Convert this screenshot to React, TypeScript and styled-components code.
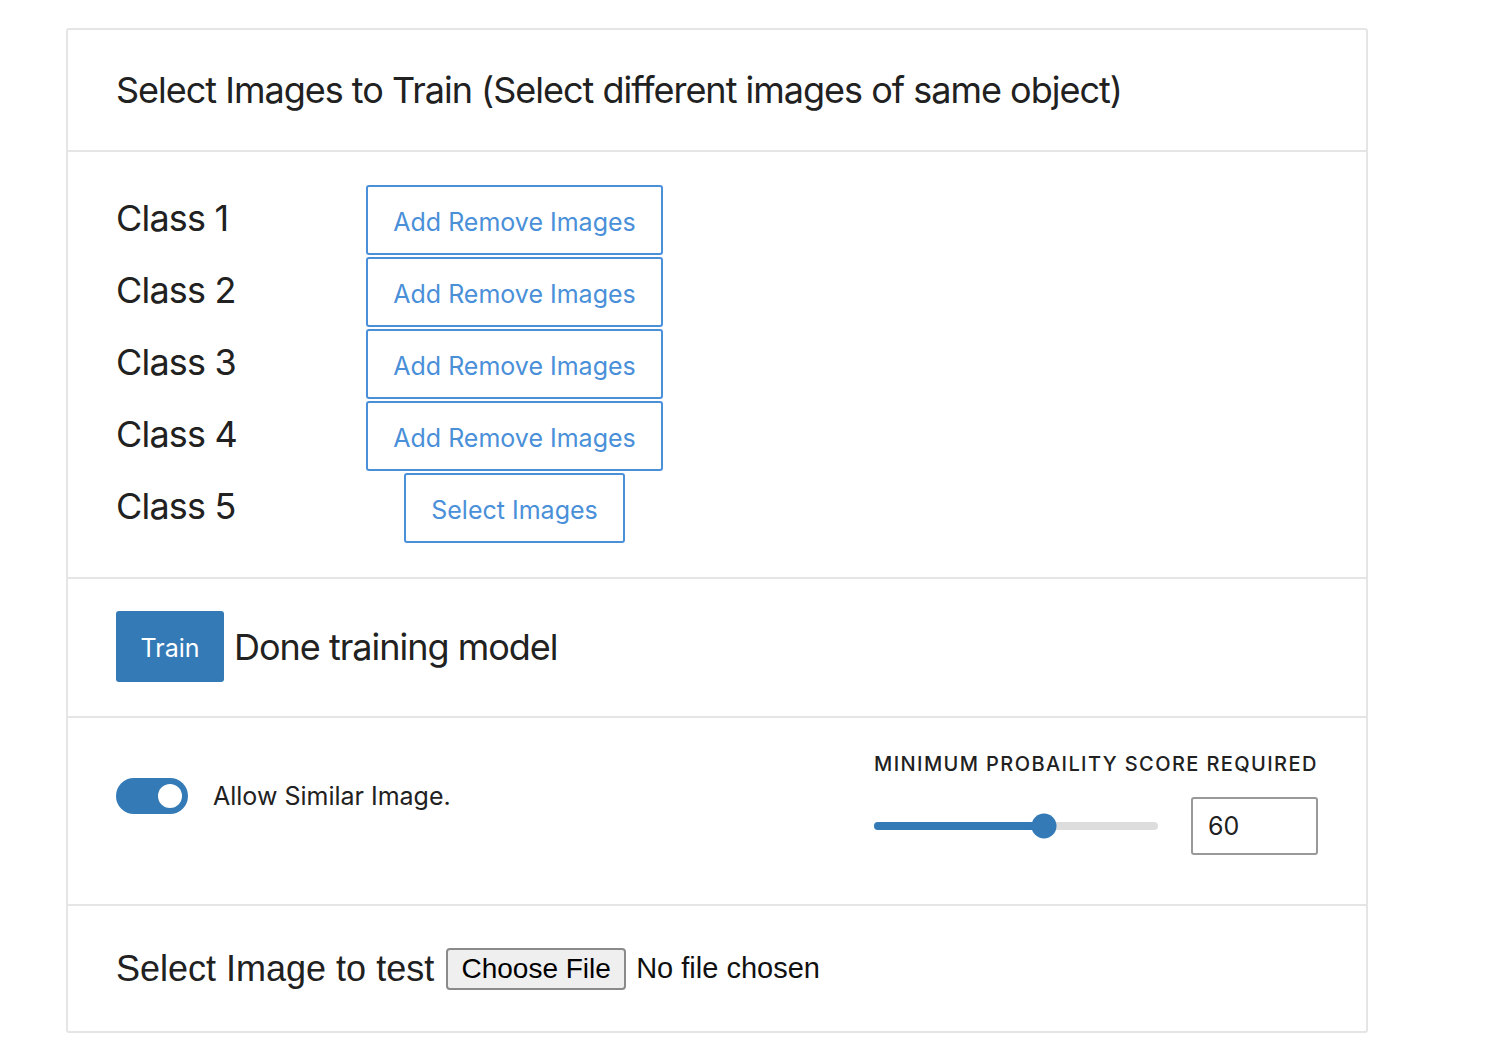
import React from "react";
import styled, { createGlobalStyle } from "styled-components";

const Global = createGlobalStyle`
  html, body { margin: 0; padding: 0; background: #fff; }
  body { font-family: Inter, "Noto Sans", sans-serif; color: #212121; }
`;

const Page = styled.div`
  padding: 28px 118px 30px 66px;
`;

const Card = styled.div`
  border: 2px solid #e5e5e5;
  border-radius: 3px;
  display: flex;
  flex-direction: column;
`;

const Section = styled.div<{ $pad: string }>`
  padding: ${(p) => p.$pad};
  border-bottom: 2px solid #e5e5e5;
  &:last-child { border-bottom: none; }
`;

const Title = styled.div`
  font-size: 36px;
  line-height: 40px;
  letter-spacing: -1px;
`;

const ClassGrid = styled.div`
  display: grid;
  grid-template-columns: 250px 297px;
  row-gap: 2px;
`;

const ClassLabel = styled.div`
  font-size: 36px;
  line-height: 40px;
  letter-spacing: -0.8px;
  display: flex;
  align-items: center;
  padding-bottom: 4px;
`;

const ButtonCell = styled.div`
  display: flex;
  justify-content: center;
`;

const OutlineButton = styled.button<{ $wide?: boolean }>`
  height: 70px;
  padding: 3px 0 0;
  border: 2px solid #4a90d9;
  border-radius: 3px;
  background: #fff;
  color: #4a90d9;
  font-family: Inter, "Noto Sans", sans-serif;
  font-size: 25px;
  letter-spacing: 0;
  cursor: pointer;
  width: ${(p) => (p.$wide ? "297px" : "221px")};
`;

const TrainRow = styled.div`
  display: flex;
  align-items: center;
  gap: 10px;
`;

const PrimaryButton = styled.button`
  width: 108px;
  height: 71px;
  border: none;
  border-radius: 3px;
  background: #337ab7;
  color: #fff;
  font-family: Inter, "Noto Sans", sans-serif;
  font-size: 25px;
  padding: 2px 0 0;
`;

const OptionsRow = styled.div`
  display: flex;
  justify-content: space-between;
  align-items: flex-start;
`;

const ToggleGroup = styled.label`
  display: flex;
  align-items: center;
  gap: 25px;
  margin-top: 26px;
  font-size: 25px;
`;

const Toggle = styled.span`
  width: 72px;
  height: 36px;
  border-radius: 18px;
  background: #337ab7;
  display: flex;
  align-items: center;
  justify-content: flex-end;
  padding: 0 6px;
  box-sizing: border-box;
`;

const Knob = styled.span`
  width: 24px;
  height: 24px;
  border-radius: 50%;
  background: #fff;
`;

const ScoreBlock = styled.div`
  display: flex;
  flex-direction: column;
  gap: 21px;
`;

const ScoreLabel = styled.div`
  font-size: 20px;
  line-height: 24px;
  letter-spacing: 1.4px;
  text-transform: uppercase;
  font-weight: 500;
`;

const SliderRow = styled.div`
  display: flex;
  align-items: center;
  gap: 33px;
`;

const Track = styled.div`
  position: relative;
  width: 284px;
  height: 8px;
  border-radius: 4px;
  background: #ddd;
`;

const Fill = styled.div`
  height: 100%;
  border-radius: 4px;
  background: #337ab7;
`;

const Thumb = styled.div`
  position: absolute;
  top: 50%;
  width: 25px;
  height: 25px;
  border-radius: 50%;
  background: #337ab7;
  transform: translate(-50%, -50%);
`;

const NumberBox = styled.div`
  width: 127px;
  height: 58px;
  box-sizing: border-box;
  border: 2px solid #999;
  border-radius: 3px;
  display: flex;
  align-items: center;
  padding-left: 15px;
  font-size: 25px;
`;

const TestRow = styled.div`
  display: flex;
  align-items: center;
  height: 41px;
  font-family: "Liberation Sans", Arial, sans-serif;
`;

const TestLabel = styled.span`
  font-size: 36px;
  margin-right: 12px;
`;

const FileButton = styled.button`
  height: 42px;
  width: 180px;
  box-sizing: border-box;
  border: 2px solid #8a8a8a;
  border-radius: 4px;
  background: #efefef;
  color: #000;
  font-family: "Liberation Sans", Arial, sans-serif;
  font-size: 28px;
  padding: 0;
`;

const FileName = styled.span`
  font-size: 29px;
  margin-left: 10px;
  color: #111;
`;

export default function App() {
  const classes = [1, 2, 3, 4, 5];
  const pct = 60;
  return (
    <>
      <Global />
      <Page>
        <Card>
          <Section $pad="40px 48px">
            <Title>Select Images to Train (Select different images of same object)</Title>
          </Section>
          <Section $pad="33px 48px 34px">
            <ClassGrid>
              {classes.map((c) => (
                <React.Fragment key={c}>
                  <ClassLabel>Class {c}</ClassLabel>
                  <ButtonCell>
                    {c < 5 ? (
                      <OutlineButton $wide>Add Remove Images</OutlineButton>
                    ) : (
                      <OutlineButton>Select Images</OutlineButton>
                    )}
                  </ButtonCell>
                </React.Fragment>
              ))}
            </ClassGrid>
          </Section>
          <Section $pad="32px 48px 34px">
            <TrainRow>
              <PrimaryButton>Train</PrimaryButton>
              <Title>Done training model</Title>
            </TrainRow>
          </Section>
          <Section $pad="34px 48px 49px">
            <OptionsRow>
              <ToggleGroup>
                <Toggle>
                  <Knob />
                </Toggle>
                Allow Similar Image.
              </ToggleGroup>
              <ScoreBlock>
                <ScoreLabel>Minimum Probaility Score Required</ScoreLabel>
                <SliderRow>
                  <Track>
                    <Fill style={{ width: `${pct}%` }} />
                    <Thumb style={{ left: `${pct}%` }} />
                  </Track>
                  <NumberBox>60</NumberBox>
                </SliderRow>
              </ScoreBlock>
            </OptionsRow>
          </Section>
          <Section $pad="42px 48px">
            <TestRow>
              <TestLabel>Select Image to test</TestLabel>
              <FileButton>Choose File</FileButton>
              <FileName>No file chosen</FileName>
            </TestRow>
          </Section>
        </Card>
      </Page>
    </>
  );
}
